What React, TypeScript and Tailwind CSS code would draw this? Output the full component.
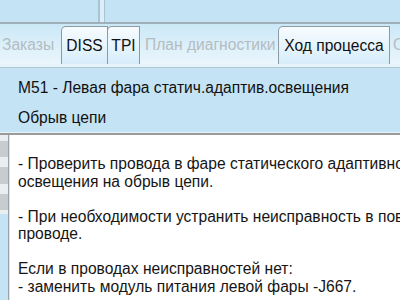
import React from 'react';

const bodyLines: string[] = [
  '- Проверить провода в фаре статического адаптивного',
  'освещения на обрыв цепи.',
  '',
  '- При необходимости устранить неисправность в поврежденном',
  'проводе.',
  '',
  'Если в проводах неисправностей нет:',
  '- заменить модуль питания левой фары -J667.',
];

const Tab: React.FC<{ label: string; active?: boolean; className?: string }> = ({ label, active, className }) =>
  active ? (
    <div
      className={`h-[38px] shrink-0 flex items-center justify-center whitespace-nowrap border border-b-0 border-[#8c9ba3] rounded-tl-[5px] bg-gradient-to-b from-[#f7fbfe] to-[#d6eefa] text-[15.6px] text-[#111] ${className ?? ''}`}
    >
      {label}
    </div>
  ) : (
    <div className={`h-[38px] shrink-0 flex items-center whitespace-nowrap text-[15.6px] text-[#b4bcc2] ${className ?? ''}`}>{label}</div>
  );

export default function App() {
  return (
    <div className="w-[400px] h-[300px] overflow-hidden bg-white font-['Liberation_Sans',Arial,sans-serif]">
      {/* Top bar */}
      <div className="h-[22px] flex bg-[#c4e3f5]">
        <div className="w-[98px]" />
        <div className="w-[2px] bg-[#a9c3d2]" />
        <div className="w-[4px] bg-[#dbeef9]" />
        <div className="w-[1px] bg-[#a9c3d2]" />
        <div className="flex-1" />
      </div>
      <div className="h-[2px] bg-[#9fb0ba]" />

      {/* Tab strip */}
      <div className="h-[40px] flex items-end overflow-hidden bg-gradient-to-b from-[#cbe8f7] to-[#eaf6fc]">
        <Tab label="Заказы" className="pl-[2px] w-[61px]" />
        <Tab label="DISS" active className="w-[47px]" />
        <Tab label="TPI" active className="w-[33px] -ml-px" />
        <Tab label="План диагностики" className="pl-[5px] w-[138px]" />
        <Tab label="Ход процесса" active className="w-[112px]" />
        <Tab label="О" className="pl-[3px]" />
      </div>
      <div className="h-[3px] bg-[#e6f3fa]" />
      <div className="h-px bg-[#b4c8d3]" />

      {/* Header panel */}
      <div className="h-[64px] bg-[#c4e3f5] pl-[18px] pt-[5px] text-[15.6px] text-[#111] leading-[30px] whitespace-nowrap">
        <div>M51 - Левая фара статич.адаптив.освещения</div>
        <div>Обрыв цепи</div>
      </div>
      <div className="h-px bg-[#e8f3f9]" />
      <div className="h-[2px] bg-[#9a9a9a]" />

      {/* Content */}
      <div className="flex h-[170px]">
        <div className="w-[8px] flex flex-col bg-[#c4e3f5]">
          <div className="h-[6px] bg-[#e9eef1]" />
          <div className="h-[16px] bg-[#c9ccce]" />
          <div className="h-[10px] bg-[#e9eef1]" />
          <div className="h-[17px] bg-[#c9ccce]" />
          <div className="h-[10px] bg-[#e9eef1]" />
          <div className="h-[16px] bg-[#c9ccce]" />
          <div className="h-[4px] bg-[#e9eef1]" />
        </div>
        <div className="w-px bg-[#9aa3a8]" />
        <div className="w-px bg-[#e2e2e2]" />
        <div className="flex-1 min-w-0 pl-[8px] pt-[20px] text-[15.6px] leading-[17.5px] text-[#151515] whitespace-nowrap overflow-hidden">
          {bodyLines.map((line, i) => (
            <div key={i} className="h-[17.5px]">
              {line}
            </div>
          ))}
        </div>
      </div>
    </div>
  );
}
